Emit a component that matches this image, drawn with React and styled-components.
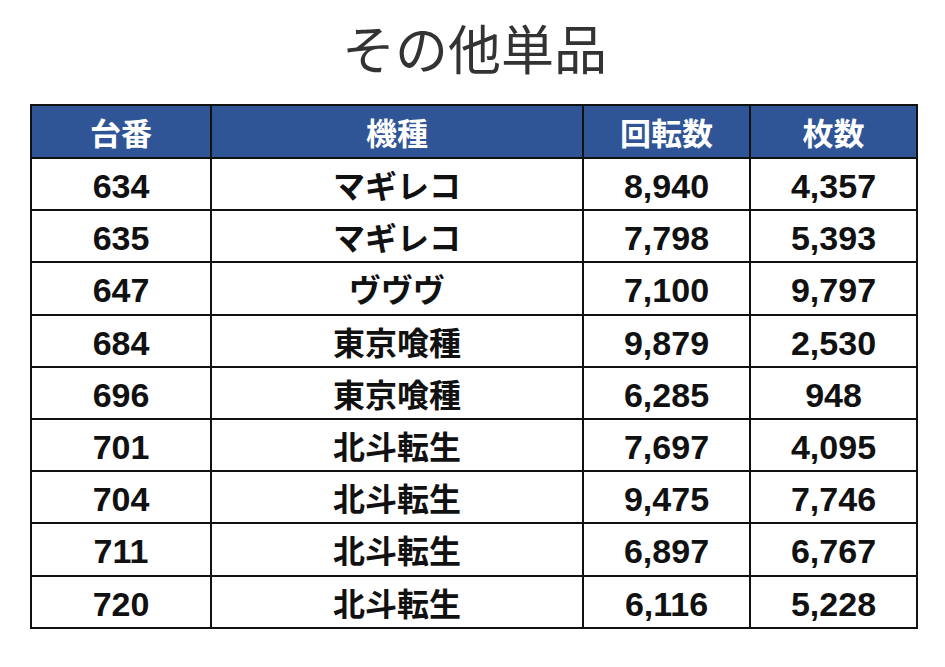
import React from 'react';
import styled, { createGlobalStyle } from 'styled-components';

const rows = [
    { no: '634', model: 'マギレコ', spins: '8,940', coins: '4,357' },
    { no: '635', model: 'マギレコ', spins: '7,798', coins: '5,393' },
    { no: '647', model: 'ヴヴヴ', spins: '7,100', coins: '9,797' },
    { no: '684', model: '東京喰種', spins: '9,879', coins: '2,530' },
    { no: '696', model: '東京喰種', spins: '6,285', coins: '948' },
    { no: '701', model: '北斗転生', spins: '7,697', coins: '4,095' },
    { no: '704', model: '北斗転生', spins: '9,475', coins: '7,746' },
    { no: '711', model: '北斗転生', spins: '6,897', coins: '6,767' },
    { no: '720', model: '北斗転生', spins: '6,116', coins: '5,228' }
];

const GlobalStyle = createGlobalStyle`
  body {
    margin: 0;
    background: #ffffff;
    font-family: "Liberation Sans", "Noto Sans CJK JP", sans-serif;
  }
`;

const Page = styled.div`
  width: 945px;
  height: 667px;
  padding: 14px 0 0 30px;
  box-sizing: border-box;
`;

const Title = styled.h1`
  margin: 0 0 0 -26px;
  text-align: center;
  font-family: "Noto Sans CJK JP", sans-serif;
  font-weight: 400;
  font-size: 53px;
  line-height: 66px;
  color: #333333;
  height: 90px;
`;

const Table = styled.table`
  border-collapse: collapse;
  width: 886px;
  table-layout: fixed;
`;

const Row = styled.tr`
  height: ${p => (p.$head ? '53px' : '52.2px')};
`;

const Head = styled.th`
  background: #2f5597;
  color: #ffffff;
  padding: 0;
  border: 2px solid #111111;
  font-family: "Noto Sans CJK JP", sans-serif;
  font-weight: 700;
  font-size: 31px;
  line-height: 1;
  text-align: center;
`;

const Cell = styled.td`
  padding: ${p => (p.$jp ? '0' : '4px 0 0')};
  border: 2px solid #111111;
  text-align: center;
  color: #111111;
  font-family: ${p => (p.$jp ? '"Noto Sans CJK JP", sans-serif' : '"Liberation Sans", "Noto Sans CJK JP", sans-serif')};
  font-weight: 700;
  font-size: ${p => (p.$jp ? '32px' : '34px')};
  line-height: 1;
`;

export default function App() {
    return (
        <>
            <GlobalStyle />
            <Page>
                <Title>その他単品</Title>
                <Table>
                    <colgroup>
                        <col style={{ width: 180 }} />
                        <col style={{ width: 372 }} />
                        <col style={{ width: 167 }} />
                        <col style={{ width: 167 }} />
                    </colgroup>
                    <thead>
                        <Row $head>
                            <Head>台番</Head>
                            <Head>機種</Head>
                            <Head>回転数</Head>
                            <Head>枚数</Head>
                        </Row>
                    </thead>
                    <tbody>
                        {rows.map(r => (
                            <Row key={r.no}>
                                <Cell>{r.no}</Cell>
                                <Cell $jp>{r.model}</Cell>
                                <Cell>{r.spins}</Cell>
                                <Cell>{r.coins}</Cell>
                            </Row>
                        ))}
                    </tbody>
                </Table>
            </Page>
        </>
    );
}
